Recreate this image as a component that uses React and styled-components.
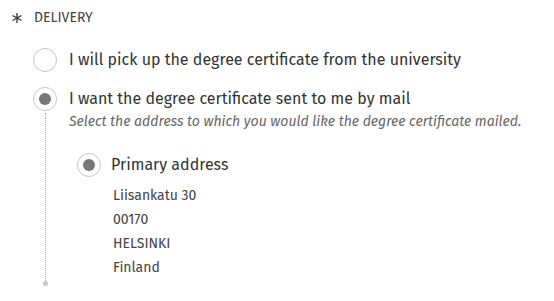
import React from "react";
import styled, { createGlobalStyle } from "styled-components";

const GlobalStyle = createGlobalStyle`
  body {
    margin: 0;
    background: #fff;
    font-family: "Fira Sans", "Open Sans", "Noto Sans", sans-serif;
    color: #333;
  }
`;

function Asterisk() {
  return (
    <svg width="10" height="10" viewBox="0 0 10 10">
      <g stroke="#333" strokeWidth="1.3" strokeLinecap="round">
        <line x1="5" y1="0.6" x2="5" y2="9.4" />
        <line x1="1" y1="2.7" x2="9" y2="7.3" />
        <line x1="1" y1="7.3" x2="9" y2="2.7" />
      </g>
    </svg>
  );
}

function App() {
  return (
    <Page>
      <GlobalStyle />
      <Header>
        <Asterisk />
        <span>Delivery</span>
      </Header>
      <List>
        <Option>
          <RadioCol>
            <Radio />
          </RadioCol>
          <Label>I will pick up the degree certificate from the university</Label>
        </Option>
        <Option spaced>
          <RadioCol>
            <Radio checked />
            <Dotted />
            <EndDot />
          </RadioCol>
          <div>
            <Label>I want the degree certificate sent to me by mail</Label>
            <Hint>Select the address to which you would like the degree certificate mailed.</Hint>
            <Nested>
              <Option narrow>
                <RadioCol>
                  <Radio checked />
                </RadioCol>
                <div>
                  <Label>Primary address</Label>
                  <Address>
                    <div>Liisankatu 30</div>
                    <div>00170</div>
                    <div>HELSINKI</div>
                    <div>Finland</div>
                  </Address>
                </div>
              </Option>
            </Nested>
          </div>
        </Option>
      </List>
    </Page>
  );
}

export default App;

const Page = styled.div`
  padding: 0 10px 0 12px;
`;

const Header = styled.div`
  display: flex;
  align-items: center;
  gap: 12px;
  height: 34px;

  > svg {
    margin-top: 2px;
  }

  > span {
    font-size: 14px;
    text-transform: uppercase;
    color: #444;
  }
`;

const List = styled.div`
  padding-left: 21px;
  padding-top: 14px;
`;

const Option = styled.div`
  display: grid;
  grid-template-columns: 24px 1fr;
  column-gap: ${(p) => (p.narrow ? "10px" : "12px")};
  margin-top: ${(p) => (p.spaced ? "15px" : "0")};
`;

const RadioCol = styled.div`
  display: flex;
  flex-direction: column;
  align-items: center;
`;

const Radio = styled.span`
  box-sizing: border-box;
  width: 24px;
  height: 24px;
  border-radius: 50%;
  border: 1.5px solid #c6c6c6;
  display: flex;
  align-items: center;
  justify-content: center;
  flex-shrink: 0;

  &::after {
    content: "";
    width: 12px;
    height: 12px;
    border-radius: 50%;
    background: ${(p) => (p.checked ? "#777" : "transparent")};
  }
`;

const Dotted = styled.div`
  flex: 1;
  width: 0;
  border-left: 1px dotted #aaa;
  margin-top: 2px;
`;

const EndDot = styled.div`
  width: 5px;
  height: 5px;
  border-radius: 50%;
  background: #c4c4c4;
`;

const Label = styled.div`
  font-size: 16px;
  line-height: 24px;
  color: #333;
`;

const Hint = styled.div`
  font-size: 14px;
  font-style: italic;
  line-height: 20px;
  color: #666;
  margin-top: 1px;
`;

const Nested = styled.div`
  padding-left: 8px;
  margin-top: 21px;
`;

const Address = styled.div`
  margin-top: 7px;
  padding-left: 2px;
  padding-bottom: 6px;
  font-size: 14px;
  line-height: 24px;
  color: #444;
`;
